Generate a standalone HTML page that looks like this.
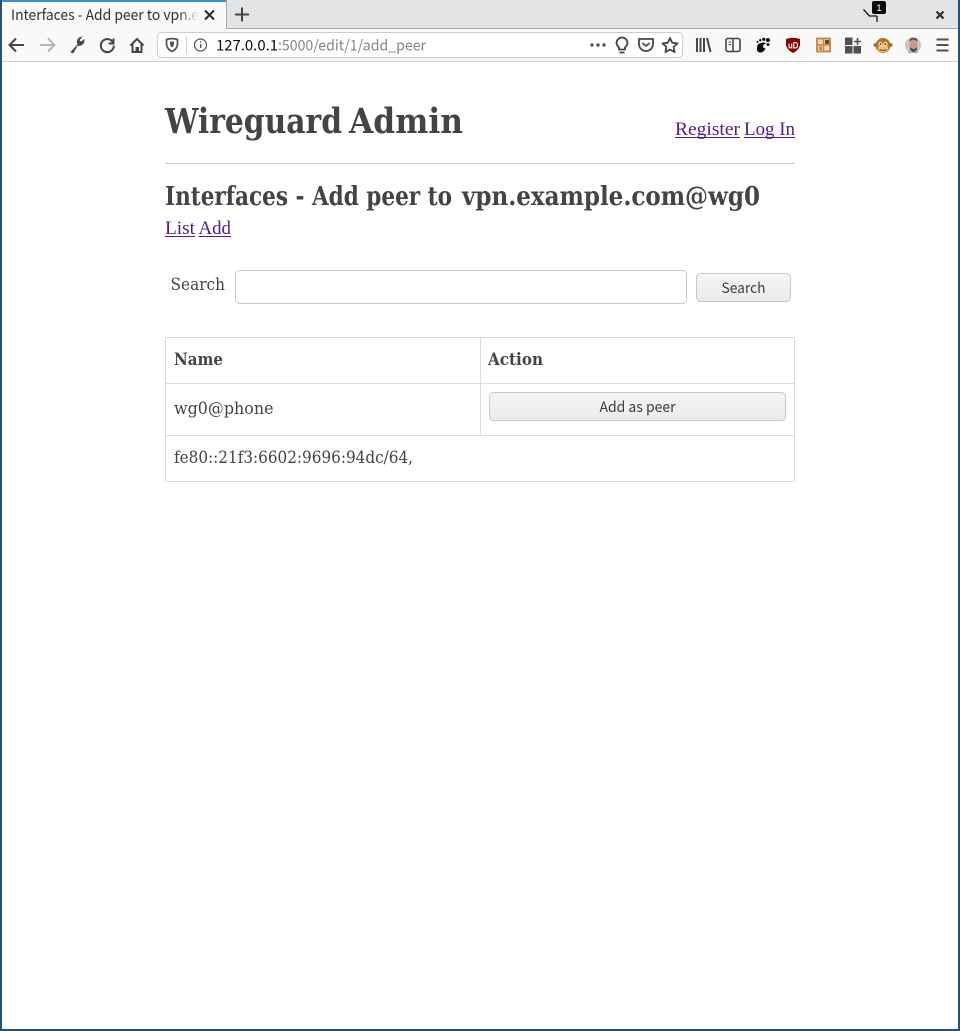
<!DOCTYPE html>
<html><head><meta charset="utf-8"><title>Interfaces - Add peer to vpn.example.com@wg0</title>
<style>
html,body{margin:0;padding:0;background:#fff;width:960px;height:1031px;overflow:hidden}
svg{position:absolute;left:0;top:0;display:block}
.s{font-family:"DejaVu Serif","Liberation Serif",serif;fill:#444}
.u{font-family:"Noto Sans CJK SC","Liberation Sans",sans-serif}
.i{fill:none;stroke:#45454a;stroke-width:2}
</style></head><body>
<svg width="960" height="1031" viewBox="0 0 960 1031" xmlns="http://www.w3.org/2000/svg">
<rect width="960" height="1031" fill="#fff"/>
<!-- chrome -->
<rect width="960" height="28" fill="#e3e4e6"/>
<rect y="28" width="960" height="1" fill="#a8a9ab"/>
<rect y="29" width="960" height="32" fill="#f9f9fa"/>
<rect y="61" width="960" height="1" fill="#cfcfd1"/>
<rect x="2" y="0" width="224" height="29" fill="#f9f9fa"/>
<rect x="2" y="0" width="224" height="2" fill="#3d8fd6"/>
<rect x="226" y="0" width="1" height="28" fill="#a8a9ab"/>
<defs><linearGradient id="fade" x1="0" x2="1"><stop offset="0" stop-color="#f9f9fa" stop-opacity="0"/><stop offset="1" stop-color="#f9f9fa"/></linearGradient>
<linearGradient id="btn" x1="0" x2="0" y1="0" y2="1"><stop offset="0" stop-color="#f6f5f4"/><stop offset="1" stop-color="#edebe9"/></linearGradient></defs>
<text class="u" x="11" y="20" font-size="14.500" fill="#303033" textLength="188" lengthAdjust="spacingAndGlyphs">Interfaces - Add peer to vpn.e</text>
<rect x="178" y="4" width="21" height="22" fill="url(#fade)"/>
<path d="M205 10.500l9 9M214 10.500l-9 9" stroke="#2c2c30" stroke-width="2" fill="none"/>
<path d="M235 14.500h14M242 7.500v14" stroke="#45454a" stroke-width="2" fill="none"/>
<!-- nav icons -->
<path class="i" d="M24 45H10M16 38.500 9.500 45l6.500 6.500"/>
<path d="M40 45h14M48 38.500l6.500 6.500-6.500 6.500" fill="none" stroke="#b4b4b7" stroke-width="2"/>
<path d="M71 52 78 44.500a5 5 0 0 1 1-6.500l2.500-.8-2.500 3 2 2 3-2.500a5 5 0 0 1-6.500 5.500L73 53z" fill="#45454a" stroke="#45454a" stroke-width=".8"/>
<path class="i" d="M113.500 38.500v5H108.500M113 42.500a6.500 6.500 0 1 0 .8 3"/>
<path class="i" d="M130.500 45.500 137 39l6.500 6.500M132.500 44v8h9v-8"/><rect x="135.500" y="47" width="3.500" height="5" fill="#45454a"/>
<!-- url bar -->
<rect x="157.500" y="32.500" width="525" height="25" rx="4" fill="#fff" stroke="#cdcdd0"/>
<path d="M166.500 39.500q5.500-1.800 11 0v5q-.5 4.500-5.500 7-5-2.500-5.500-7z" fill="none" stroke="#55555a" stroke-width="1.800"/>
<path d="M170 41.500h4v3q-.4 2-2 3-1.600-1-2-3z" fill="#55555a"/>
<rect x="186" y="36" width="1" height="18" fill="#d4d4d6"/>
<circle cx="200.500" cy="45" r="6" fill="none" stroke="#55555a" stroke-width="1.200"/>
<rect x="200" y="44" width="1.300" height="4" fill="#55555a"/><rect x="200" y="41.500" width="1.300" height="1.400" fill="#55555a"/>
<text class="u" x="216" y="50.500" font-size="14.500" fill="#0c0c0d" textLength="62" lengthAdjust="spacingAndGlyphs">127.0.0.1</text>
<text class="u" x="278" y="50.500" font-size="14.500" fill="#86868a" textLength="148" lengthAdjust="spacingAndGlyphs">:5000/edit/1/add_peer</text>
<g fill="#55555a"><circle cx="592" cy="45" r="1.700"/><circle cx="598" cy="45" r="1.700"/><circle cx="604" cy="45" r="1.700"/></g>
<path d="M619 47.500c-1-1.200-2.500-2.200-2.500-4.500a5.500 5.500 0 0 1 11 0c0 2.300-1.500 3.300-2.500 4.500v2h-6z" fill="none" stroke="#45454a" stroke-width="1.800"/><path d="M619.500 52.500h5" stroke="#45454a" stroke-width="1.800"/>
<path d="M639 39h14v5a7 7 0 0 1-14 0z" fill="none" stroke="#45454a" stroke-width="1.800"/><path d="M642.500 43l3.500 3 3.500-3" fill="none" stroke="#45454a" stroke-width="1.800"/>
<path d="M670 38l2.200 4.800 5.300.6-3.900 3.500 1 5.200-4.600-2.600-4.600 2.600 1-5.200-3.900-3.500 5.300-.6z" fill="none" stroke="#45454a" stroke-width="1.800" stroke-linejoin="round"/>
<!-- toolbar right -->
<path d="M697 38v14M700.500 38v14M704 38v14M707 38l3.500 14" stroke="#45454a" stroke-width="2" fill="none"/>
<rect x="726" y="38.500" width="14" height="13" rx="2" fill="none" stroke="#45454a" stroke-width="1.600"/><path d="M733 38.500v13" stroke="#45454a" stroke-width="1.600"/><path d="M728.500 42h2.500M728.500 44.500h2.500" stroke="#45454a"/>
<path d="M757.500 45c2-2 6-3.500 8.500-1.500-2 .5-3 1.500-3 3 0 1.300 1 1.800 2.500 1.800-.5 2-2.500 4.200-5 4.200-3 0-4-2.500-3.500-4.500z" fill="#0c0c0d"/><g fill="#0c0c0d"><circle cx="768" cy="40" r="2"/><circle cx="763.800" cy="39.300" r="1.600"/><circle cx="760.300" cy="40.200" r="1.200"/><circle cx="757.500" cy="42" r="1"/><circle cx="768" cy="44.500" r="1.500"/></g>
<path d="M786 39q7-2.500 14 0v6q-1 5-7 8-6-3-7-8z" fill="#800"/>
<text x="788" y="48.500" font-family="Liberation Sans,sans-serif" font-size="9" font-weight="bold" fill="#fff" textLength="10.500" lengthAdjust="spacingAndGlyphs">uD</text>
<rect x="817" y="38.500" width="13" height="13" fill="#eadcc8" stroke="#c98335" stroke-width="1.800"/><path d="M823.500 38v14M817 45h13" stroke="#c98335" stroke-width="1.500"/><rect x="819" y="46.500" width="3" height="3.500" fill="#c98335"/><rect x="825" y="40" width="4" height="4" fill="#6a4a20"/>
<g fill="#505054"><rect x="845" y="37.500" width="7.500" height="7.500"/><rect x="845" y="46" width="7.500" height="7.500"/><rect x="853.500" y="46" width="7.500" height="7.500"/></g><path d="M854 41.500h7M857.500 38v7" stroke="#505054" stroke-width="1.600"/>
<circle cx="883" cy="45.500" r="7.500" fill="#b5702a"/><ellipse cx="883" cy="48.500" rx="5.500" ry="3.800" fill="#eec27e"/><circle cx="880.500" cy="44" r="2.200" fill="#f0dca8"/><circle cx="885.500" cy="44" r="2.200" fill="#f0dca8"/><circle cx="880.500" cy="44" r="1" fill="#3c6b2c"/><circle cx="885.500" cy="44" r="1" fill="#3c6b2c"/><circle cx="875.200" cy="45" r="1.800" fill="#a8651f"/><circle cx="890.800" cy="45" r="1.800" fill="#a8651f"/><path d="M879.500 49.500q3.500 1.800 7 0" stroke="#6a3d12" fill="none"/>
<circle cx="913" cy="45" r="8" fill="#c9c7c6"/><ellipse cx="913.500" cy="44.500" rx="4" ry="5" fill="#c99a85"/><path d="M909.500 42q4-5 8 0l-.5-3q-3.500-2-7 0z" fill="#4e3c34"/><path d="M910 47q3.500 4 7 0l0 3-3.500 2.500-3.500-2.500z" fill="#5b4a42"/><path d="M907.500 51q5.500 3.500 11 0l-2 1.800h-7z" fill="#333"/>
<path d="M936.500 39.500h12M936.500 45h12M936.500 50.500h12" stroke="#505054" stroke-width="2" fill="none"/>
<!-- titlebar right -->
<path d="M863.500 9.500l6 6.500h7.500M877 16v6" stroke="#111" stroke-width="1.300" fill="none"/>
<rect x="872" y="1" width="14" height="13" rx="2" fill="#0b0b0b"/>
<text x="879" y="11" text-anchor="middle" font-family="Liberation Sans,sans-serif" font-size="9.500" fill="#fff">1</text>
<path d="M936.500 11.500l7 7M943.500 11.500l-7 7" stroke="#2c2c30" stroke-width="2.200" fill="none"/>
<!-- window border -->
<rect x="0" y="0" width="2" height="1031" fill="#1f5378"/>
<rect x="958" y="0" width="2" height="1031" fill="#1f5378"/>
<rect x="0" y="1029" width="960" height="2" fill="#1f5378"/>
<!-- page -->
<text class="s" x="165" y="133" font-size="34.500" font-weight="bold" textLength="177" lengthAdjust="spacingAndGlyphs">Wireguard</text>
<text class="s" x="349" y="133" font-size="34.500" font-weight="bold" textLength="114" lengthAdjust="spacingAndGlyphs">Admin</text>
<text x="675" y="135" font-family="Liberation Serif,serif" font-size="19" fill="#551a8b" textLength="65" lengthAdjust="spacingAndGlyphs">Register</text>
<rect x="675" y="137" width="65" height="1" fill="#551a8b"/>
<text x="744" y="135" font-family="Liberation Serif,serif" font-size="19" fill="#551a8b" textLength="51" lengthAdjust="spacingAndGlyphs">Log In</text>
<rect x="744" y="137" width="51" height="1" fill="#551a8b"/>
<rect x="165" y="163" width="630" height="1" fill="#cccccc"/>
<text class="s" x="165" y="205" font-size="26.500" font-weight="bold" textLength="287" lengthAdjust="spacingAndGlyphs">Interfaces - Add peer to</text>
<text class="s" x="462" y="205" font-size="26.500" font-weight="bold" textLength="298" lengthAdjust="spacingAndGlyphs">vpn.example.com@wg0</text>
<text x="165" y="234" font-family="Liberation Serif,serif" font-size="19" fill="#551a8b" textLength="30" lengthAdjust="spacingAndGlyphs">List</text>
<rect x="165" y="236" width="30" height="1" fill="#551a8b"/>
<text x="198.500" y="234" font-family="Liberation Serif,serif" font-size="19" fill="#551a8b" textLength="32.500" lengthAdjust="spacingAndGlyphs">Add</text>
<rect x="198.500" y="236" width="32.500" height="1" fill="#551a8b"/>
<text class="s" x="170.500" y="290" font-size="17" textLength="54.500" lengthAdjust="spacingAndGlyphs">Search</text>
<rect x="235.500" y="270.500" width="451" height="33" rx="4" fill="#fff" stroke="#cdc7c2"/>
<rect x="696.500" y="273.500" width="94" height="28" rx="4" fill="url(#btn)" stroke="#cdc7c2"/>
<text class="u" x="743.500" y="293" text-anchor="middle" font-size="14.500" fill="#3d3d3d" textLength="44" lengthAdjust="spacingAndGlyphs">Search</text>
<g fill="none" stroke="#dcdcdc"><rect x="165.500" y="337.500" width="629" height="144"/><path d="M165 383.500h630M165 435.500h630M480.500 337v99"/></g>
<text class="s" x="174" y="365" font-size="17" font-weight="bold" textLength="49" lengthAdjust="spacingAndGlyphs">Name</text>
<text class="s" x="488" y="365" font-size="17" font-weight="bold" textLength="55" lengthAdjust="spacingAndGlyphs">Action</text>
<text class="s" x="174" y="414" font-size="17" textLength="99.500" lengthAdjust="spacingAndGlyphs">wg0@phone</text>
<rect x="489.500" y="392.500" width="296" height="28" rx="4" fill="url(#btn)" stroke="#cdc7c2"/>
<text class="u" x="637.500" y="412" text-anchor="middle" font-size="14.500" fill="#3d3d3d" textLength="76" lengthAdjust="spacingAndGlyphs">Add as peer</text>
<text class="s" x="174" y="463" font-size="17" textLength="239" lengthAdjust="spacingAndGlyphs">fe80::21f3:6602:9696:94dc/64,</text>
</svg>
</body></html>
